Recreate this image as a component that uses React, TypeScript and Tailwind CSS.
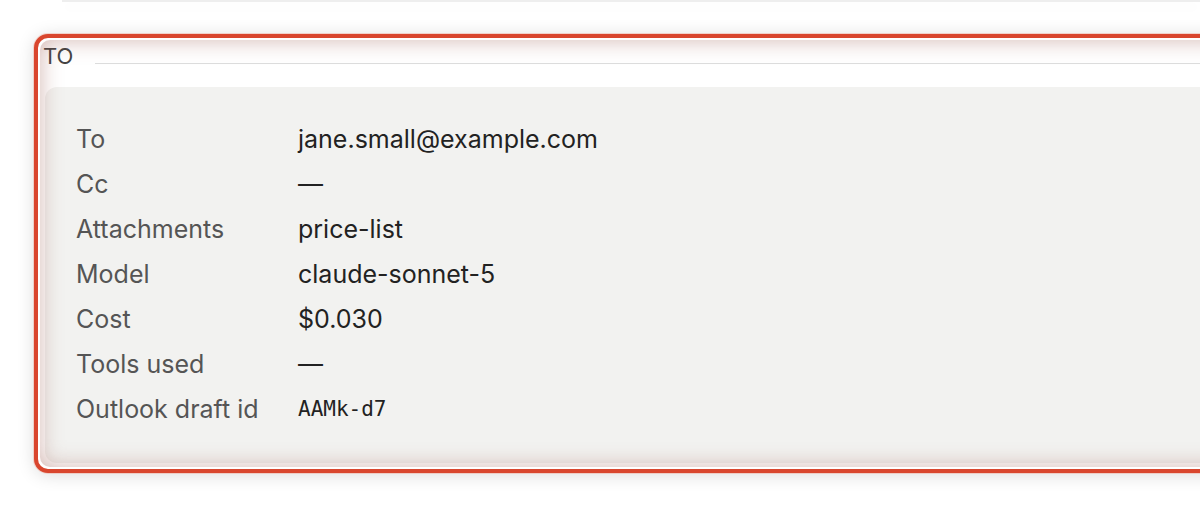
import React from 'react';

const rows: { label: string; value: string; mono?: boolean }[] = [
  { label: 'To', value: 'jane.small@example.com' },
  { label: 'Cc', value: '—' },
  { label: 'Attachments', value: 'price-list' },
  { label: 'Model', value: 'claude-sonnet-5' },
  { label: 'Cost', value: '$0.030' },
  { label: 'Tools used', value: '—' },
  { label: 'Outlook draft id', value: 'AAMk-d7', mono: true },
];

const App: React.FC = () => {
  return (
    <div className="w-[1200px] h-[506px] overflow-hidden bg-white font-['Inter','Noto_Sans',sans-serif]">
      <div className="ml-[62px] h-[2px] bg-[#eeeeee] shadow-[0_6px_12px_rgba(0,0,0,0.04)]" />

      <div className="pl-[34px] pt-[32px]">
        <div className="w-[1220px] rounded-[14px] border-4 border-[#d9462e] bg-white p-[2px] shadow-[0_0_0_1px_rgba(240,150,130,0.35),0_2px_18px_rgba(0,0,0,0.14)]">
          <div className="relative rounded-[10px] bg-white pb-[4px] after:pointer-events-none after:absolute after:inset-0 after:rounded-[10px] after:shadow-[inset_0_0_22px_rgba(150,80,70,0.42)]">
            <div className="flex items-end pl-[3px] pt-[5px]">
              <span className="text-[22px] leading-[22px] text-[#444]">TO</span>
              <div className="ml-[22px] mb-[3px] h-px flex-1 bg-[#dddddd]" />
            </div>

            <div className="ml-[5px] mt-[20px] rounded-l-[12px] bg-[#f2f2f0] pl-[31px] pt-[30px] pb-[31px]">
              {rows.map((row) => (
                <div key={row.label} className="flex h-[45px] items-center">
                  <span className="w-[222px] text-[25px] text-[#555]">{row.label}</span>
                  {row.mono ? (
                    <span className="font-['DejaVu_Sans_Mono',monospace] text-[21px] text-[#222]">{row.value}</span>
                  ) : (
                    <span className="text-[25px] text-[#222]">{row.value}</span>
                  )}
                </div>
              ))}
            </div>
          </div>
        </div>
      </div>
    </div>
  );
};

export default App;
